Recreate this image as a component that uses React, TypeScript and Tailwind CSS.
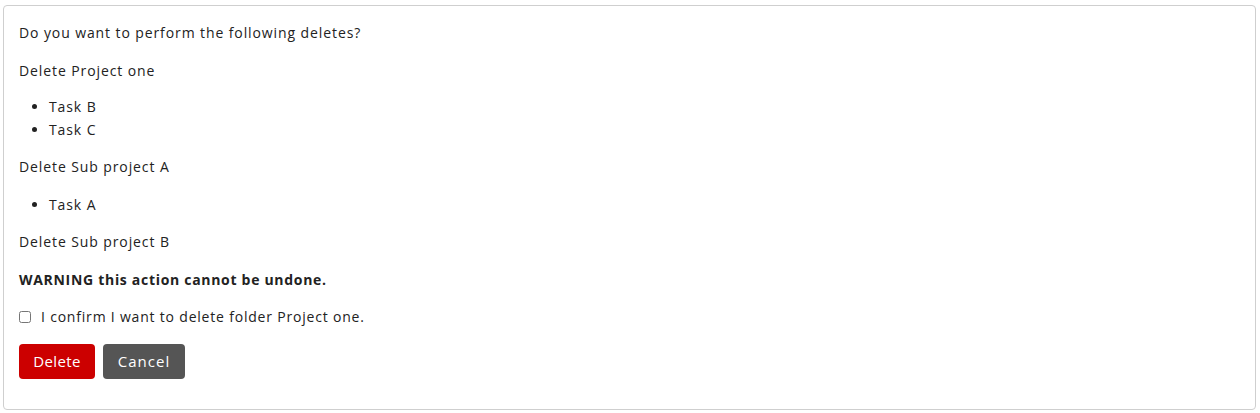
export default function App() {
  return (
    <div className="bg-white pt-[5px] pl-[3px] pr-[4px] pb-[3px] text-[14px] leading-[22.5px] tracking-[0.9px] text-[#222]" style={{ fontFamily: '"Open Sans", "DejaVu Sans", sans-serif' }}>
      <div className="border border-[#cfcfcf] rounded-[4px] px-[15px] pt-[16px] pb-[30px]">
        <p className="mb-[15px]">Do you want to perform the following deletes?</p>

        <p className="mb-[14px]">Delete Project one</p>
        <ul className="list-disc pl-[30px] mb-[15px]">
          <li>Task B</li>
          <li>Task C</li>
        </ul>

        <p className="mb-[15px]">Delete Sub project A</p>
        <ul className="list-disc pl-[30px] mb-[15px]">
          <li>Task A</li>
        </ul>

        <p className="mb-[15px]">Delete Sub project B</p>

        <p className="mb-[15px] font-bold tracking-[0.7px]">WARNING this action cannot be undone.</p>

        <label className="flex items-center mb-[15px]">
          <input type="checkbox" className="w-[12px] h-[12px] m-0 mr-[10px]" />
          <span className="tracking-[0.8px]">I confirm I want to delete folder Project one.</span>
        </label>

        <div className="flex gap-[8px]">
          <button className="w-[76px] h-[35px] rounded-[4px] bg-[#cc0000] text-white text-[15px] tracking-[0.4px]">Delete</button>
          <button className="w-[82px] h-[35px] rounded-[4px] bg-[#555555] text-white text-[15px] tracking-[1px]">Cancel</button>
        </div>
      </div>
    </div>
  );
}
